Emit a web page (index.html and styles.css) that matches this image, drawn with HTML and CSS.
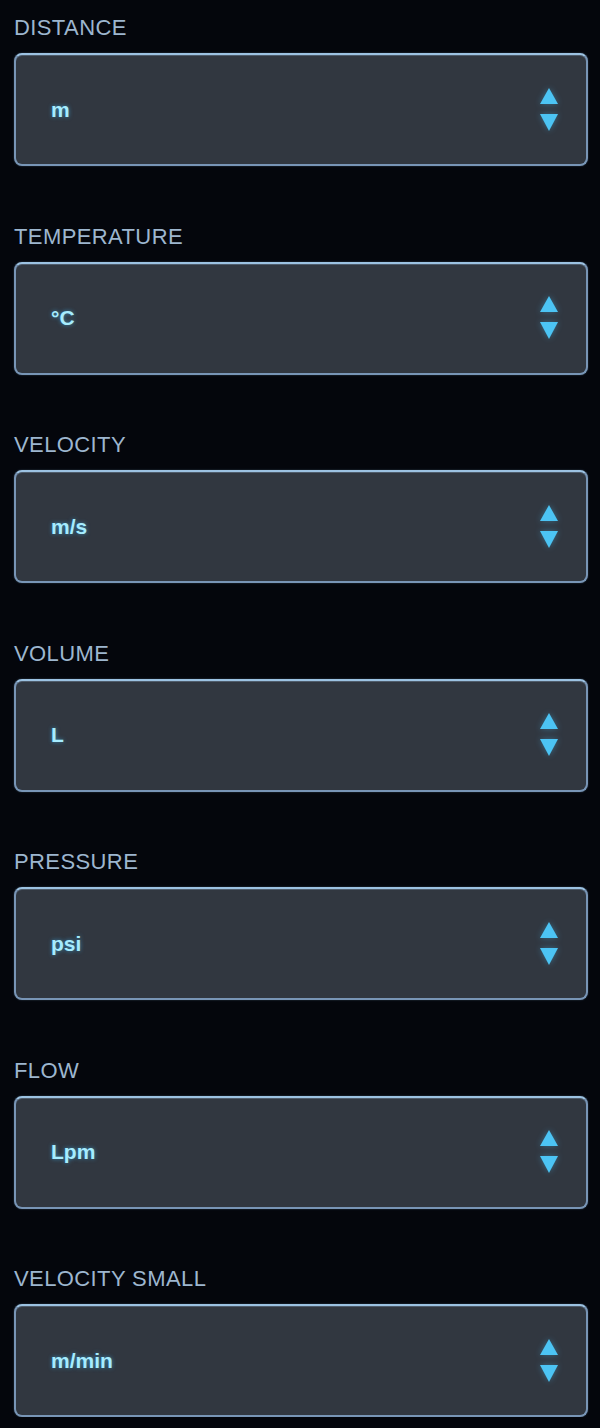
FILE: index.html
```html
<!DOCTYPE html>
<html>
<head>
<meta charset="utf-8">
<link rel="stylesheet" href="styles.css">
</head>
<body>
<div class="list">
  <div class="field">
    <div class="label">DISTANCE</div>
    <div class="select"><span class="value">m</span><span class="spin"><svg viewBox="0 0 18 44" width="18" height="44"><polygon points="9,0 18,16 0,16"/><polygon points="0,26 18,26 9,43"/></svg></span></div>
  </div>
  <div class="field">
    <div class="label">TEMPERATURE</div>
    <div class="select"><span class="value">°C</span><span class="spin"><svg viewBox="0 0 18 44" width="18" height="44"><polygon points="9,0 18,16 0,16"/><polygon points="0,26 18,26 9,43"/></svg></span></div>
  </div>
  <div class="field">
    <div class="label">VELOCITY</div>
    <div class="select"><span class="value">m/s</span><span class="spin"><svg viewBox="0 0 18 44" width="18" height="44"><polygon points="9,0 18,16 0,16"/><polygon points="0,26 18,26 9,43"/></svg></span></div>
  </div>
  <div class="field">
    <div class="label">VOLUME</div>
    <div class="select"><span class="value">L</span><span class="spin"><svg viewBox="0 0 18 44" width="18" height="44"><polygon points="9,0 18,16 0,16"/><polygon points="0,26 18,26 9,43"/></svg></span></div>
  </div>
  <div class="field">
    <div class="label">PRESSURE</div>
    <div class="select"><span class="value">psi</span><span class="spin"><svg viewBox="0 0 18 44" width="18" height="44"><polygon points="9,0 18,16 0,16"/><polygon points="0,26 18,26 9,43"/></svg></span></div>
  </div>
  <div class="field">
    <div class="label">FLOW</div>
    <div class="select"><span class="value">Lpm</span><span class="spin"><svg viewBox="0 0 18 44" width="18" height="44"><polygon points="9,0 18,16 0,16"/><polygon points="0,26 18,26 9,43"/></svg></span></div>
  </div>
  <div class="field">
    <div class="label">VELOCITY SMALL</div>
    <div class="select"><span class="value">m/min</span><span class="spin"><svg viewBox="0 0 18 44" width="18" height="44"><polygon points="9,0 18,16 0,16"/><polygon points="0,26 18,26 9,43"/></svg></span></div>
  </div>
</div>
</body>
</html>
```
FILE: styles.css
```css
html, body {
  margin: 0;
  padding: 0;
  background: #04060c;
}
body {
  font-family: "Liberation Sans", Arial, sans-serif;
}
.list {
  display: flex;
  flex-direction: column;
  gap: 58.5px;
  padding: 16px 12px 0 14px;
}
.field {
  display: flex;
  flex-direction: column;
  gap: 13px;
}
.label {
  font-size: 22px;
  line-height: 24px;
  color: #9db6cf;
  letter-spacing: 0.4px;
}
.select {
  box-sizing: border-box;
  height: 113px;
  border: 2px solid #7895b6;
  border-top-color: #9cc2e2;
  border-radius: 8px;
  background: #313740;
  box-shadow: inset 0 1px 0 rgba(170, 205, 235, 0.25), 0 0 2px rgba(140, 185, 225, 0.35);
  display: flex;
  align-items: center;
  justify-content: space-between;
  padding: 0 28px 0 35px;
}
.value {
  font-size: 21px;
  font-weight: bold;
  color: #a6ecff;
  text-shadow: 0 0 4px rgba(60, 190, 255, 0.6);
}
.spin {
  display: flex;
  filter: drop-shadow(0 0 3px rgba(70, 190, 245, 0.4));
}
.spin svg polygon {
  fill: #4cc4f4;
}
```
